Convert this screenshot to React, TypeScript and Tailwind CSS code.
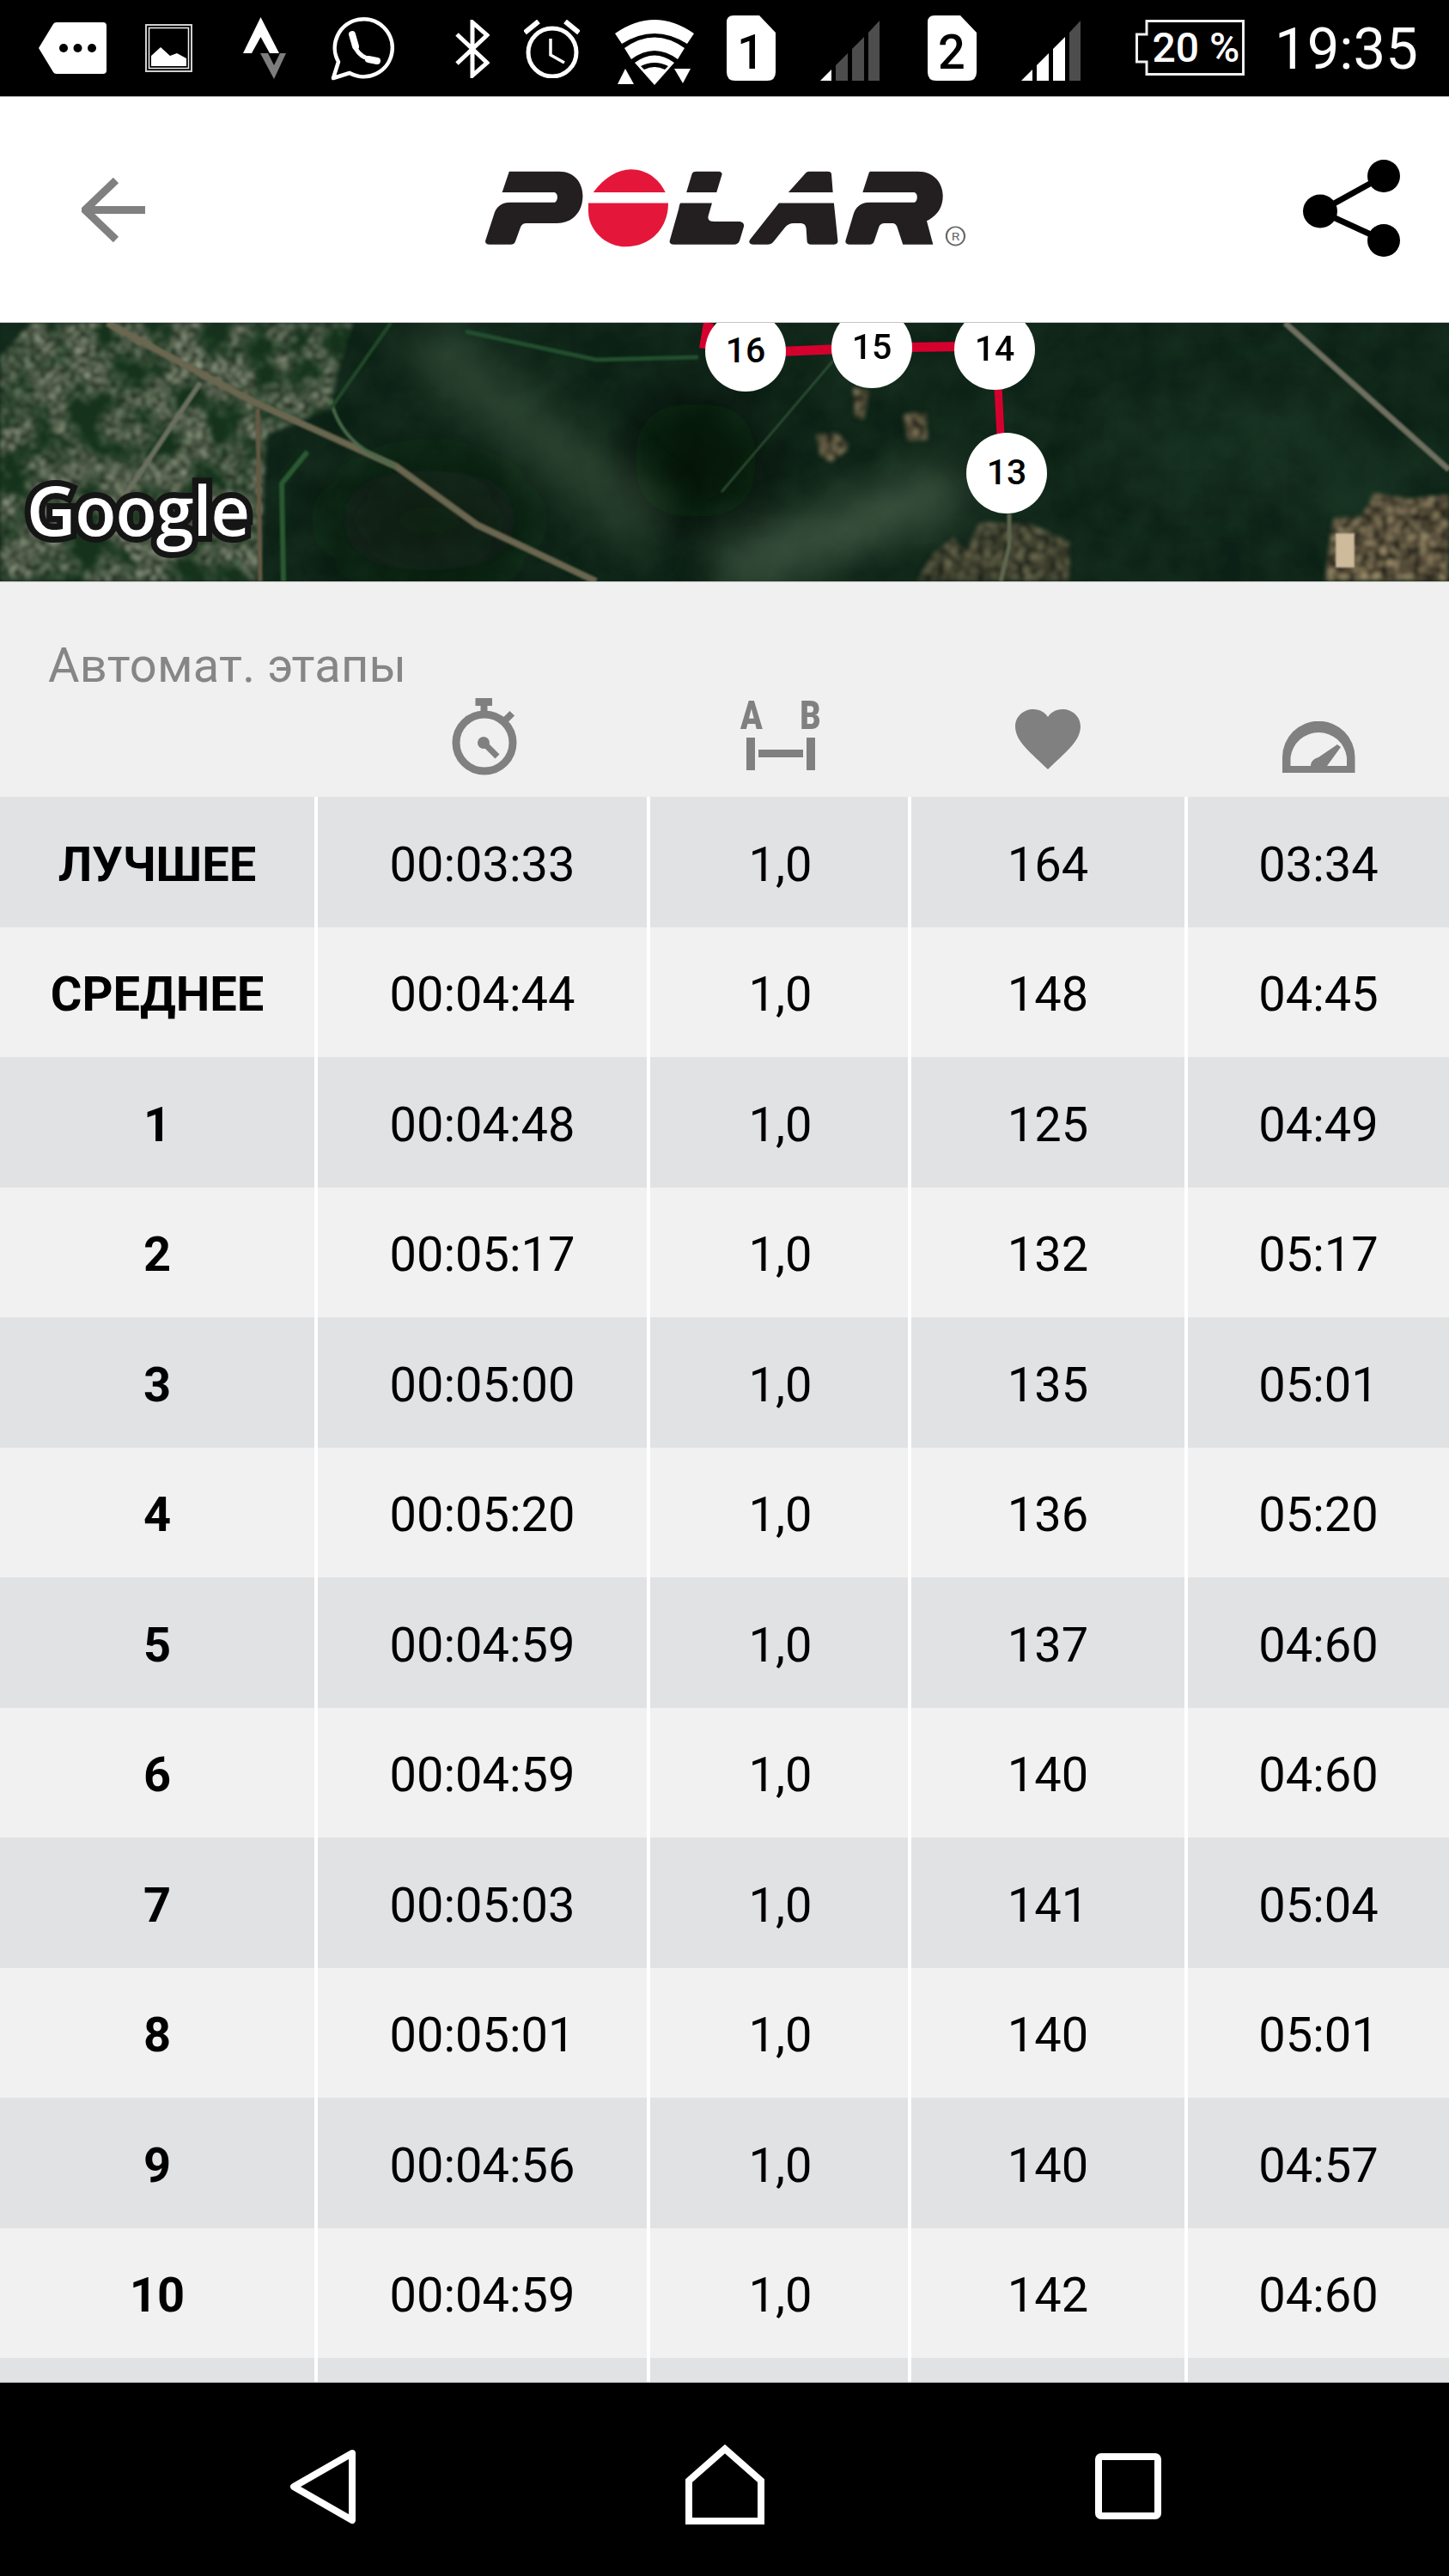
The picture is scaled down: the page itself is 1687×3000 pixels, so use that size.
import React from "react";

const rows: [string, string, string, string, string][] = [
  ["ЛУЧШЕЕ", "00:03:33", "1,0", "164", "03:34"],
  ["СРЕДНЕЕ", "00:04:44", "1,0", "148", "04:45"],
  ["1", "00:04:48", "1,0", "125", "04:49"],
  ["2", "00:05:17", "1,0", "132", "05:17"],
  ["3", "00:05:00", "1,0", "135", "05:01"],
  ["4", "00:05:20", "1,0", "136", "05:20"],
  ["5", "00:04:59", "1,0", "137", "04:60"],
  ["6", "00:04:59", "1,0", "140", "04:60"],
  ["7", "00:05:03", "1,0", "141", "05:04"],
  ["8", "00:05:01", "1,0", "140", "05:01"],
  ["9", "00:04:56", "1,0", "140", "04:57"],
  ["10", "00:04:59", "1,0", "142", "04:60"],
  ["", "", "", "", ""],
];

function Signal({ lit }: { lit: number }) {
  const bars = ["0,70 13,57 13,70", "18,52 32,38 32,70 18,70", "37,33 51,19 51,70 37,70", "56,14 69,0 69,70 56,70"];
  return (
    <svg width="70" height="70" viewBox="0 0 70 70" className="mt-[24px] ml-[52px] shrink-0">
      {bars.map((p, i) => (
        <polygon key={p} points={p} fill={i < lit ? "#ffffff" : "#4d4d4d"} />
      ))}
    </svg>
  );
}

function Sim({ n, ml }: { n: string; ml: string }) {
  return (
    <svg width="57" height="76" viewBox="0 0 57 76" className={`mt-[18px] shrink-0 ${ml}`}>
      <path d="M8 0H38L57 20V66Q57 76 47 76H10Q0 76 0 66V8Q0 0 8 0Z" fill="#fff" />
      <text x="28" y="62" textAnchor="middle" fontSize="56" fontWeight="500" fontFamily="Roboto, sans-serif" fill="#000">
        {n}
      </text>
    </svg>
  );
}

function StatusBar() {
  return (
    <div className="flex h-[113px] shrink-0 items-start border-b border-[#b5b5b5] bg-black pl-[45px]">
      <svg width="79" height="60" viewBox="0 0 79 60" className="mt-[26px] shrink-0">
        <path d="M0 30L17 2Q18 0 21 0H75Q79 0 79 4V56Q79 60 75 60H21Q18 60 17 58Z" fill="#fff" />
        <circle cx="29" cy="30" r="5" fill="#000" />
        <circle cx="45.5" cy="30" r="5" fill="#000" />
        <circle cx="62" cy="30" r="5" fill="#000" />
      </svg>
      <svg width="55" height="56" viewBox="0 0 55 56" className="mt-[28px] ml-[45px] shrink-0">
        <rect x="1" y="1" width="53" height="54" fill="none" stroke="#d0d0d0" strokeWidth="2" />
        <rect x="4.5" y="4.5" width="46" height="47" fill="none" stroke="#f0f0f0" strokeWidth="1.5" />
        <path d="M7 49V37L18 27L29 37L37 34L48 40V49Z" fill="#fff" />
      </svg>
      <svg width="50" height="72" viewBox="0 0 50 72" className="mt-[20px] ml-[59px] shrink-0">
        <path d="M20.5 0L42 42H31L20.5 23L10 42H0Z" fill="#fff" />
        <path d="M20 42H50L36 72ZM29 42L36 56L43 42Z" fill="#7d7d7d" fillRule="evenodd" />
      </svg>
      <svg width="74" height="75" viewBox="0 0 74 75" className="mt-[19px] ml-[52px] shrink-0">
        <path d="M3 72L9 53A33.5 33.5 0 1 1 22 66Z" fill="none" stroke="#fff" strokeWidth="4.5" strokeLinejoin="round" />
        <path d="M27 24C25 38 36 50 50 50" fill="none" stroke="#fff" strokeWidth="5" />
        <path d="M25 21L29 35M44 50L54 52" fill="none" stroke="#fff" strokeWidth="8" strokeLinecap="round" />
      </svg>
      <svg width="40" height="68" viewBox="0 0 40 68" className="mt-[23px] ml-[71px] shrink-0">
        <path d="M2 17L37 50L20 65V3L37 18L2 51" fill="none" stroke="#fff" strokeWidth="5" />
      </svg>
      <svg width="65" height="68" viewBox="0 0 65 68" className="mt-[23px] ml-[40px] shrink-0">
        <circle cx="33" cy="38" r="28" fill="none" stroke="#fff" strokeWidth="5" />
        <path d="M31 22V41L47 50" fill="none" stroke="#fff" strokeWidth="3.5" />
        <path d="M1 15L17 2M48 2L64 15" fill="none" stroke="#fff" strokeWidth="6" />
      </svg>
      <svg width="92" height="76" viewBox="0 0 92 76" className="mt-[23px] ml-[41px] shrink-0">
        <path d="M0 16Q46 -16 92 16L84 28Q46 4 8 28Z" fill="#fff" />
        <path d="M11 33Q46 8 81 33L73 46Q46 26 19 46Z" fill="#fff" />
        <path d="M23 50Q46 33 69 50L46 76Z" fill="#fff" />
        <path d="M30 54Q46 46 62 54L58 58Q46 52 34 58Z" fill="#000" />
        <path d="M12 57L22 75H3Z" fill="#fff" />
        <path d="M69 57H88L79 74Z" fill="#fff" />
      </svg>
      <Sim n="1" ml="ml-[38px]" />
      <Signal lit={1} />
      <Sim n="2" ml="ml-[55px]" />
      <Signal lit={3} />
      <div className="relative mt-[23px] ml-[63px] h-[65px] w-[127px] shrink-0">
        <svg width="127" height="65" viewBox="0 0 127 65" className="absolute inset-0">
          <path d="M13 1.5H125.5V63.5H13V49H1.5V17H13Z" fill="none" stroke="#f0f0f0" strokeWidth="3" />
        </svg>
        <span className="absolute inset-0 flex items-center justify-center pl-[14px] text-[48px] leading-none font-medium whitespace-nowrap text-white">
          20 %
        </span>
      </div>
      <span className="mt-[20px] ml-[35px] text-[67px] leading-[74px] text-white">19:35</span>
    </div>
  );
}

function PolarLogo() {
  return (
    <svg width="571" height="97" viewBox="100 100 1400 290" preserveAspectRatio="none" className="mt-[80px] ml-[392px] shrink-0">
      <g fill="#231f20">
        <path d="M178 120H320C365 120 388 160 388 205C388 260 360 300 315 300H228C218 300 213 305 210 315L196 362C194 370 190 374 182 374H122C112 374 108 368 111 358L134 272C140 245 155 228 180 228H305C318 228 320 193 305 193H158Z" />
        <path d="M700 128C702 122 706 120 712 120H775C783 120 787 125 785 132L770 193H684Z" />
        <path d="M668 230H757L747 272C743 288 750 294 762 294H832C845 294 851 303 847 315L836 360C833 370 828 374 820 374H648C638 374 634 367 637 358L662 250C664 238 665 230 668 230Z" />
        <path d="M1025 125C1028 121 1032 120 1038 120H1088C1095 120 1098 124 1098 130L1102 193H975Z" />
        <path d="M948 230H1105L1116 360C1117 370 1112 374 1104 374H1040C1032 374 1028 370 1028 360L1026 320C1025 306 1020 300 1008 300H990C980 300 972 305 965 315L932 365C928 371 923 374 915 374H875C864 374 860 366 866 356Z" />
        <path d="M1208 120H1345C1390 120 1416 160 1416 205C1416 245 1400 275 1370 292L1388 374H1302L1286 315C1283 305 1280 300 1270 300H1252C1240 300 1236 305 1233 315L1220 362C1218 370 1214 374 1206 374H1150C1140 374 1136 368 1139 358L1160 272C1166 245 1182 228 1205 228H1332C1345 228 1347 193 1332 193H1187L1205 125Z" />
      </g>
      <path d="M418 193C450 140 490 113 525 113C570 113 605 145 624 193Z" fill="#e4173a" />
      <path d="M404 230H632C632 320 580 382 510 382C450 382 404 320 404 260Z" fill="#e4173a" />
      <ellipse cx="1452" cy="345" rx="26" ry="32" fill="none" stroke="#666" strokeWidth="5" />
      <text x="1452" y="359" textAnchor="middle" fontSize="38" fontFamily="Roboto, sans-serif" fill="#666">
        R
      </text>
    </svg>
  );
}

function Header() {
  return (
    <div className="flex h-[263px] shrink-0 items-start border-b border-[#c4c4c4] bg-white pl-[95px]">
      <svg width="74" height="75" viewBox="0 0 74 75" className="mt-[94px] shrink-0">
        <path d="M74 37.5H4" stroke="#808080" strokeWidth="9" fill="none" />
        <path d="M40 3L4 37.5L40 72" stroke="#808080" strokeWidth="9" fill="none" />
      </svg>
      <PolarLogo />
      <svg width="113" height="113" viewBox="0 0 113 113" className="mt-[73px] ml-[385px] shrink-0">
        <path d="M94 19L20 60L94 94" fill="none" stroke="#000" strokeWidth="7" />
        <ellipse cx="94" cy="19" rx="19" ry="19" fill="#000" />
        <ellipse cx="20" cy="60" rx="20" ry="19.5" fill="#000" />
        <ellipse cx="94" cy="94" rx="19" ry="19" fill="#000" />
      </svg>
    </div>
  );
}

function Marker({ n, className }: { n: string; className: string }) {
  return (
    <div className={`absolute flex h-[94px] w-[94px] items-center justify-center rounded-full bg-white text-[41px] font-medium text-black ${className}`}>
      {n}
    </div>
  );
}

function MapPanel() {
  return (
    <div className="relative h-[302px] shrink-0 overflow-hidden border-b border-[#c4c4c4] bg-[#0c2115]">
      <svg width="1687" height="301" viewBox="0 0 1687 301" className="absolute inset-0">
        <defs>
          <filter id="city" x="0" y="0" width="100%" height="100%" colorInterpolationFilters="sRGB">
            <feTurbulence type="fractalNoise" baseFrequency="0.17" numOctaves="3" seed="7" />
            <feColorMatrix values="1.5 0 0 0 -0.4  1.5 0 0 0 -0.36  1.35 0 0 0 -0.36  0 0 0 0 1" />
            <feGaussianBlur stdDeviation="0.7" />
          </filter>
          <filter id="patch" x="0" y="0" width="100%" height="100%" colorInterpolationFilters="sRGB">
            <feTurbulence type="fractalNoise" baseFrequency="0.025" numOctaves="3" seed="21" />
            <feColorMatrix values="0 0 0 0 0.07  0 0 0 0 0.2  0 0 0 0 0.1  3.2 0 0 0 -1.25" />
          </filter>
          <filter id="tan" x="0" y="0" width="100%" height="100%" colorInterpolationFilters="sRGB">
            <feTurbulence type="fractalNoise" baseFrequency="0.13" numOctaves="3" seed="3" />
            <feColorMatrix values="1.7 0 0 0 -0.42  1.55 0 0 0 -0.42  1.2 0 0 0 -0.33  0 0 0 0 1" />
            <feGaussianBlur stdDeviation="0.8" />
          </filter>
          <filter id="forest" x="0" y="0" width="100%" height="100%" colorInterpolationFilters="sRGB">
            <feTurbulence type="fractalNoise" baseFrequency="0.022" numOctaves="4" seed="11" />
            <feColorMatrix values="0 0 0 0 0.1  0 0 0 0 0.21  0 0 0 0 0.14  1 0 0 0 -0.25" />
          </filter>
          <filter id="b1"><feGaussianBlur stdDeviation="0.9" /></filter>
          <filter id="b5" x="-10%" y="-10%" width="120%" height="120%"><feGaussianBlur stdDeviation="2.5" /></filter>
          <filter id="b2" x="-100%" y="-100%" width="300%" height="300%"><feGaussianBlur stdDeviation="26" /></filter>
          <filter id="b3" x="-200%" y="-200%" width="500%" height="500%"><feGaussianBlur stdDeviation="40" /></filter>
          <clipPath id="urban">
            <path d="M0 40L35 0H410L392 60L385 100L310 130L302 301H0Z" />
          </clipPath>
          <clipPath id="v1">
            <path d="M1067 301L1085 270L1110 250L1125 265L1140 232L1200 234L1245 255V301Z" />
          </clipPath>
          <clipPath id="v2">
            <path d="M1542 301L1552 228L1585 225L1600 198L1640 205L1687 200V301Z" />
          </clipPath>
          <clipPath id="v3">
            <path d="M993 76L1012 78L1006 112H996ZM950 130L975 128L990 145L968 162L955 155ZM1052 106L1078 104L1080 136L1056 138Z" />
          </clipPath>
        </defs>
        <rect width="1687" height="301" filter="url(#forest)" />
        <ellipse cx="810" cy="160" rx="75" ry="70" fill="#020b06" opacity="0.8" filter="url(#b3)" />
        <ellipse cx="500" cy="230" rx="110" ry="60" fill="#071b0e" opacity="0.7" filter="url(#b3)" />
        <path d="M490 20L760 240" stroke="#5a7558" strokeWidth="60" opacity="0.42" filter="url(#b2)" />
        <path d="M840 290L1120 190" stroke="#6c8168" strokeWidth="55" opacity="0.55" filter="url(#b2)" />
        <path d="M1300 150L1500 130L1640 240" stroke="#2f5440" strokeWidth="70" fill="none" opacity="0.3" filter="url(#b3)" />
        <g filter="url(#b5)">
          <g clipPath="url(#urban)">
            <rect width="420" height="301" filter="url(#city)" opacity="0.85" />
            <rect width="420" height="301" filter="url(#patch)" />
          </g>
        </g>
        <g filter="url(#b5)">
          <g clipPath="url(#v1)">
            <rect x="1060" y="225" width="190" height="76" filter="url(#tan)" opacity="0.5" />
          </g>
          <g clipPath="url(#v2)">
            <rect x="1540" y="190" width="147" height="111" filter="url(#tan)" opacity="0.75" />
          </g>
          <g clipPath="url(#v3)">
            <rect x="945" y="70" width="140" height="95" filter="url(#tan)" opacity="0.65" />
          </g>
        </g>
        <path d="M1010 116H1052" stroke="#3f6a3a" strokeWidth="12" opacity="0.6" filter="url(#b1)" />
        <rect x="1555" y="245" width="22" height="40" fill="#cdbb9c" filter="url(#b1)" />
        <g fill="none" filter="url(#b1)">
          <path d="M125 0L293 91L461 167L555 235L694 301" stroke="#6b6650" strokeWidth="8" />
          <path d="M300 100L303 301" stroke="#665a44" strokeWidth="5" />
          <path d="M233 70L146 200" stroke="#6a6f5e" strokeWidth="6" />
          <path d="M385 90C395 130 420 150 461 167" stroke="#4a6b49" strokeWidth="4" />
          <path d="M330 301L328 187L358 150" stroke="#2a5a33" strokeWidth="6" />
          <path d="M385 100L455 0" stroke="#24492c" strokeWidth="4" />
          <path d="M542 10L694 43L813 40" stroke="#22502f" strokeWidth="5" />
          <path d="M970 44L840 197" stroke="#365a3c" strokeWidth="2" />
          <path d="M1496 0L1687 171" stroke="#6f6f60" strokeWidth="7" />
          <path d="M1175 222V260L1165 301" stroke="#5e6850" strokeWidth="5" />
        </g>
        <path d="M825 0L820 30" stroke="#d6002f" strokeWidth="12" />
        <path d="M870 35L1015 29L1157 27" stroke="#d6002f" strokeWidth="11" fill="none" />
        <path d="M1160 35L1167 170" stroke="#d6002f" strokeWidth="9" fill="none" />
      </svg>
      <Marker n="16" className="top-[-14px] left-[821px]" />
      <Marker n="15" className="top-[-18px] left-[968px]" />
      <Marker n="14" className="top-[-16px] left-[1111px]" />
      <Marker n="13" className="top-[128px] left-[1125px]" />
      <span className="absolute top-[175px] left-[31px] text-[79px] leading-[86px] font-semibold tracking-[-1px] text-white [-webkit-text-stroke:14px_#151515] [font-family:'Open_Sans',sans-serif] [paint-order:stroke_fill]">
        Google
      </span>
    </div>
  );
}

function TableHead() {
  return (
    <div className="shrink-0 pt-[63px]">
      <div className="h-[68px] pl-[56px] text-[56px] leading-[68px] tracking-[0.25px] text-[#868686]">Автомат. этапы</div>
      <div className="grid h-[119px] grid-cols-[366px_383px_300px_318px_1fr] gap-x-[4px]">
        <div />
        <div className="flex justify-center">
          <svg width="76" height="91" viewBox="0 0 76 91" className="mt-[3px] ml-[4px]">
            <circle cx="38" cy="53" r="33" fill="none" stroke="#808080" strokeWidth="9" />
            <rect x="27.5" y="1" width="19.5" height="9" fill="#808080" />
            <rect x="33.5" y="10" width="8" height="9" fill="#808080" />
            <rect x="62" y="17" width="8" height="12" transform="rotate(45 66 23)" fill="#808080" />
            <circle cx="37" cy="53" r="7" fill="#808080" />
            <path d="M37 53L53 69" stroke="#808080" strokeWidth="7" />
          </svg>
        </div>
        <div className="flex justify-center">
          <div className="mt-[8px] ml-[3px] flex w-[94px] flex-col">
            <div className="flex h-[33px] justify-between text-[46px] leading-[33px] font-black text-[#808080]">
              <span className="origin-left scale-x-[0.82]">A</span>
              <span className="origin-right scale-x-[0.82]">B</span>
            </div>
            <svg width="94" height="47" viewBox="0 33 94 47">
              <rect x="7" y="42" width="10" height="38" fill="#808080" />
              <rect x="77" y="42" width="10" height="38" fill="#808080" />
              <rect x="21" y="56" width="52" height="9" fill="#808080" />
            </svg>
          </div>
        </div>
        <div className="flex justify-center">
          <svg width="76" height="70" viewBox="0 0 76 70" className="mt-[17px]">
            <path d="M38 70C20 52 0 38 0 20C0 8 10 0 21 0C29 0 35 4 38 9C41 4 47 0 55 0C66 0 76 8 76 20C76 38 56 52 38 70Z" fill="#808080" />
          </svg>
        </div>
        <div className="flex justify-center">
          <svg width="85" height="60" viewBox="0 0 85 60" className="mt-[31px]">
            <path d="M0 60V42A42 42 0 0 1 84.5 42V60ZM9.5 52H75V42A33 33 0 0 0 9.5 42Z" fill="#808080" fillRule="evenodd" />
            <path d="M33 52C33 46 38 43 42 42L64 27L68 30L52 52Z" fill="#808080" />
          </svg>
        </div>
      </div>
    </div>
  );
}

function Table() {
  return (
    <div className="min-h-0 flex-1 overflow-hidden">
      {rows.map((r, i) => (
        <div key={i} className="grid h-[151.5px] grid-cols-[366px_383px_300px_318px_1fr] gap-x-[4px] bg-white text-[56px] text-black">
          {r.map((c, j) => (
            <div
              key={j}
              className={`flex items-center justify-center pt-[6px] ${i % 2 === 0 ? "bg-[#e1e2e4]" : "bg-[#f1f1f1]"} ${j === 0 ? "font-bold" : ""} ${j === 2 ? "pl-[3px]" : ""}`}
            >
              {c}
            </div>
          ))}
        </div>
      ))}
    </div>
  );
}

function NavBar() {
  return (
    <div className="flex h-[226px] shrink-0 items-start border-t border-[#b5b5b5] bg-black pl-[337px]">
      <svg width="78" height="88" viewBox="0 0 78 88" className="mt-[77px] shrink-0">
        <path d="M73 5L5 44L73 83Z" fill="none" stroke="#fff" strokeWidth="8" strokeLinejoin="round" />
      </svg>
      <svg width="92" height="93" viewBox="0 0 92 93" className="mt-[72px] ml-[383px] shrink-0">
        <path d="M46 5L88 42V89H4V42Z" fill="none" stroke="#fff" strokeWidth="8" />
      </svg>
      <svg width="77" height="77" viewBox="0 0 77 77" className="mt-[82px] ml-[385px] shrink-0">
        <rect x="4" y="4" width="69" height="69" rx="3" fill="none" stroke="#fff" strokeWidth="8" />
      </svg>
    </div>
  );
}

export default function App() {
  return (
    <div className="flex h-[3000px] w-[1687px] flex-col overflow-hidden bg-[#f0f0f0] [font-family:Roboto,sans-serif]">
      <StatusBar />
      <Header />
      <MapPanel />
      <TableHead />
      <Table />
      <NavBar />
    </div>
  );
}
